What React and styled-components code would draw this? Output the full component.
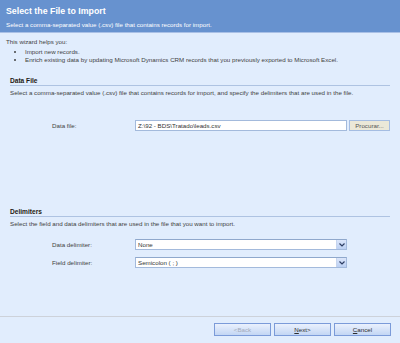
import styled, { createGlobalStyle } from 'styled-components'

const GlobalStyle = createGlobalStyle`
	html, body {
		margin: 0;
		padding: 0;
		background: #e1edfd;
	}
	body {
		font-family: "Liberation Sans", Arial, sans-serif;
		color: #424242;
	}
`

const App = () => {

	return (
		<Page>
			<GlobalStyle />
			<Header>
				<Title>Select the File to Import</Title>
				<Subtitle>Select a comma-separated value (.csv) file that contains records for import.</Subtitle>
			</Header>
			<Content>
				<Intro>
					<Text>This wizard helps you:</Text>
					<List>
						<li>Import new records.</li>
						<li>Enrich existing data by updating Microsoft Dynamics CRM records that you previously exported to Microsoft Excel.</li>
					</List>
				</Intro>

				<Section>
					<SectionTitle>Data File</SectionTitle>
					<Text>Select a comma-separated value (.csv) file that contains records for import, and specify the delimiters that are used in the file.</Text>
				</Section>
				<FieldRow $top={23}>
					<Label>Data file:</Label>
					<Input>Z:\92 - BDS\Tratado\leads.csv</Input>
					<BrowseButton>Procurar...</BrowseButton>
				</FieldRow>

				<Section $top={77}>
					<SectionTitle>Delimiters</SectionTitle>
					<Text>Select the field and data delimiters that are used in the file that you want to import.</Text>
				</Section>
				<FieldRow $top={11}>
					<Label>Data delimiter:</Label>
					<Select>
						<SelectValue>None</SelectValue>
						<Arrow><Chevron /></Arrow>
					</Select>
				</FieldRow>
				<FieldRow $top={7}>
					<Label>Field delimiter:</Label>
					<Select>
						<SelectValue>Semicolon ( ; )</SelectValue>
						<Arrow><Chevron /></Arrow>
					</Select>
				</FieldRow>
			</Content>
			<Footer>
				<WizardButton disabled>&lt;<u>B</u>ack</WizardButton>
				<WizardButton><u>N</u>ext&gt;</WizardButton>
				<WizardButton><u>C</u>ancel</WizardButton>
			</Footer>
		</Page>
	);
}

const Chevron = () => (
	<svg width="6" height="4" viewBox="0 0 6 4">
		<path d="M0.5 0.5 L3 3 L5.5 0.5" fill="none" stroke="#2d3e63" strokeWidth="1.2" />
	</svg>
)

const Page = styled.div`
	width: 400px;
	height: 343px;
	display: flex;
	flex-direction: column;
	background: #e1edfd;
	overflow: hidden;
`

const Header = styled.div`
	height: 33px;
	box-sizing: border-box;
	padding: 6px 6px 0;
	background: #6792cf;
	border-bottom: 1px solid #a9c0e6;
	color: #ffffff;
`

const Title = styled.div`
	font-size: 8.8px;
	font-weight: bold;
	line-height: 11px;
`

const Subtitle = styled.div`
	font-size: 6.2px;
	line-height: 8px;
	margin-top: 4px;
`

const Content = styled.div`
	flex: 1;
	padding: 5px 10px 0 6px;
`

const Intro = styled.div``

const Text = styled.div`
	font-size: 6.2px;
	line-height: 8px;
`

const List = styled.ul`
	margin: 2px 0 0;
	padding-left: 19px;
	font-size: 6.2px;
	line-height: 8px;
	list-style: disc;
`

const Section = styled.div`
	margin-top: ${p => p.$top ?? 13}px;
	padding-left: 4px;
	${Text} {
		margin-top: 3px;
	}
`

const SectionTitle = styled.div`
	font-size: 6.6px;
	font-weight: bold;
	line-height: 8px;
	color: #1f1a12;
	border-bottom: 1px solid #aec3e2;
`

const FieldRow = styled.div`
	display: flex;
	align-items: center;
	margin-top: ${p => p.$top}px;
	padding-left: 46px;
	font-size: 6.2px;
`

const Label = styled.div`
	width: 83px;
`

const Input = styled.div`
	width: 212px;
	height: 11px;
	box-sizing: border-box;
	padding: 0 2px;
	background: #ffffff;
	border: 1px solid #a3badc;
	line-height: 9px;
	color: #333;
	white-space: nowrap;
`

const BrowseButton = styled.div`
	margin-left: 2px;
	width: 41px;
	height: 11px;
	box-sizing: border-box;
	background: #ebe8d8;
	border: 1px solid #a5bde2;
	color: #555;
	line-height: 9px;
	text-align: center;
`

const Select = styled.div`
	width: 212px;
	height: 11px;
	box-sizing: border-box;
	display: flex;
	background: #ffffff;
	border: 1px solid #a3badc;
	border-top-color: #8fa8cc;
`

const SelectValue = styled.div`
	flex: 1;
	padding: 0 2px;
	line-height: 9px;
	color: #333;
`

const Arrow = styled.div`
	width: 9px;
	display: flex;
	align-items: center;
	justify-content: center;
	background: linear-gradient(#dbe6fa, #bcd0f3);
	border-left: 1px solid #c6d5ee;
`

const Footer = styled.div`
	display: flex;
	justify-content: flex-end;
	gap: 3px;
	padding: 6px 9px 7px 0;
	border-top: 1px solid #cdd2da;
`

const WizardButton = styled.div`
	width: 57px;
	height: 13px;
	box-sizing: border-box;
	border: 1px solid #7b9bd9;
	background: linear-gradient(#eaf1fd, #c3d6f4);
	font-size: 6.2px;
	line-height: 11px;
	text-align: center;
	color: ${p => p.disabled ? '#a3abbb' : '#2d2d2d'};
	u {
		text-decoration: ${p => p.disabled ? 'none' : 'underline'};
	}
`

export default App;
